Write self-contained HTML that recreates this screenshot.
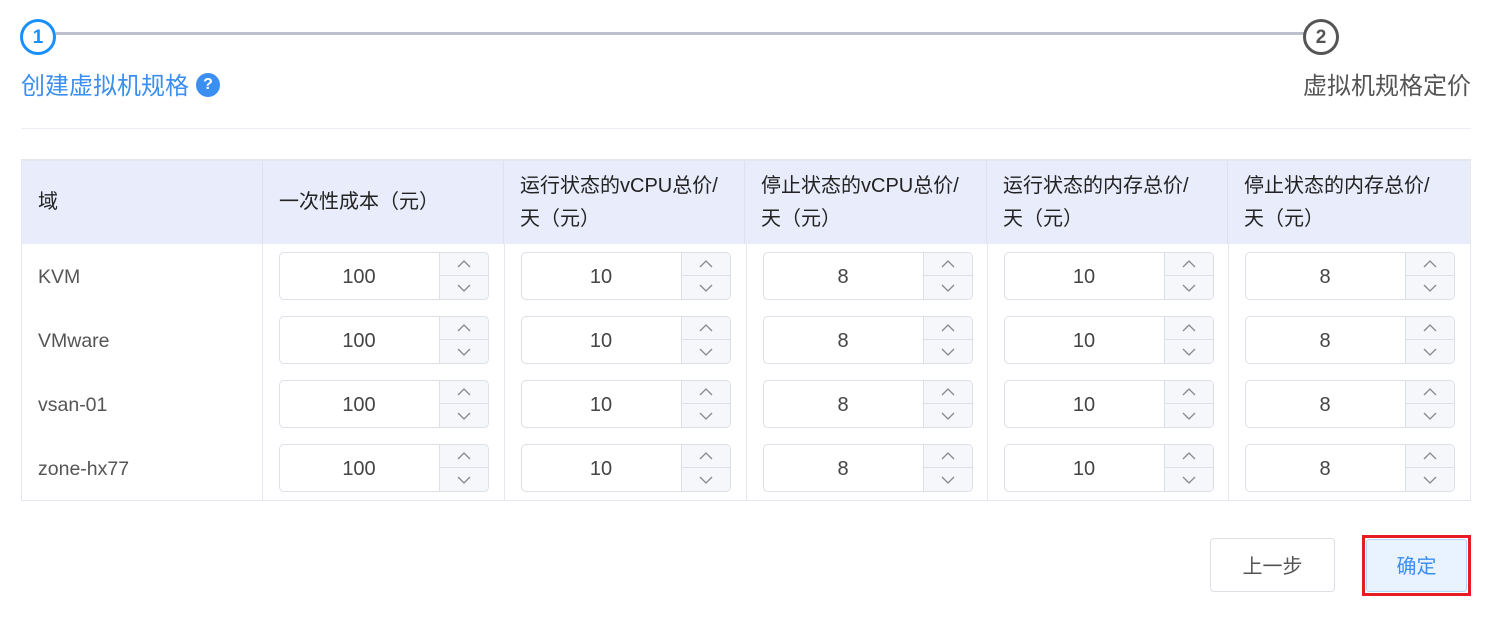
<!DOCTYPE html>
<html><head><meta charset="utf-8"><style>
*{box-sizing:border-box;margin:0;padding:0}
body{width:1501px;height:617px;background:#fff;font-family:"Liberation Sans","Noto Sans CJK SC",sans-serif;position:relative;overflow:hidden}
.abs{position:absolute}
.circ{position:absolute;width:36px;height:36px;border-radius:50%;border:3px solid;font-weight:bold;font-size:19px;text-align:center;line-height:31px;background:#fff}
.hcell{position:absolute;top:161px;height:83px;background:#e9ecfb;border-right:1px solid #dde2f0;font-size:20px;color:#222;padding-left:16px;display:flex;align-items:center;line-height:33px}
.cell{position:absolute;height:64px;border-right:1px solid #e4e7ed}
.lbl{font-size:19.5px;color:#555;padding-left:16px;line-height:66px}
.inp{position:absolute;left:16px;top:8px;width:210px;height:48px;border:1px solid #dcdfe6;border-radius:5px;background:#fff;overflow:hidden}
.inp .v{position:absolute;left:0;top:0;width:158px;height:46px;line-height:49px;text-align:center;font-size:20px;color:#444}
.sp{position:absolute;right:0;top:0;width:49px;height:46px;background:#f5f7fa;border-left:1px solid #dcdfe6}
.sp div{height:23px;display:flex;align-items:center;justify-content:center}
.sp div:first-child{border-bottom:1px solid #dcdfe6}
</style></head><body>
<div class="abs" style="left:56px;top:32px;width:1248px;height:3px;background:#bcc1cc"></div>
<div class="circ" style="left:20px;top:19px;border-color:#1890ff;color:#1890ff">1</div>
<div class="circ" style="left:1303px;top:19px;border-color:#555;color:#555">2</div>
<div class="abs" style="left:21px;top:72px;font-size:24px;color:#3a8ff0;line-height:30px">创建虚拟机规格</div>
<div class="abs" style="left:196px;top:73px;width:24px;height:24px;border-radius:50%;background:#3a8ff0;color:#fff;font-weight:bold;font-size:16px;text-align:center;line-height:24px">?</div>
<div class="abs" style="right:30px;top:72px;font-size:24px;color:#555;line-height:30px">虚拟机规格定价</div>
<div class="abs" style="left:21px;top:128px;width:1450px;height:1px;background:#ebeef5"></div>
<div class="abs" style="left:21px;top:159px;width:1450px;height:342px;border:1px solid #e4e7ed;border-top:2px solid #e4e7ed"></div>
<div class="hcell" style="left:22px;width:241px">域</div>
<div class="hcell" style="left:263px;width:241px">一次性成本（元）</div>
<div class="hcell" style="left:504px;width:241px">运行状态的vCPU总价/<br>天（元）</div>
<div class="hcell" style="left:745px;width:242px">停止状态的vCPU总价/<br>天（元）</div>
<div class="hcell" style="left:987px;width:241px">运行状态的内存总价/<br>天（元）</div>
<div class="hcell" style="left:1228px;width:242px;border-right:0">停止状态的内存总价/<br>天（元）</div>
<div id="rows"></div>
<div class="abs" style="left:1210px;top:538px;width:125px;height:54px;border:1px solid #dcdfe6;border-radius:4px;font-size:20px;color:#555;text-align:center;line-height:56px">上一步</div>
<div class="abs" style="left:1362px;top:535px;width:109px;height:61px;border:3px solid #e41c23"></div>
<div class="abs" style="left:1366px;top:539px;width:101px;height:53px;background:#e8f3ff;border:1px solid #b3d6fb;border-radius:3px;font-size:20px;color:#3a8ff0;text-align:center;line-height:54px">确定</div>
<script>
var names=["KVM","VMware","vsan-01","zone-hx77"],vals=["100","10","8","10","8"];
var xs=[22,263,505,747,988,1229,1470],h="";
var up='<svg width="14" height="8" viewBox="0 0 14 8"><path d="M1 7L7 1L13 7" fill="none" stroke="#888" stroke-width="1.3"/></svg>';
var dn='<svg width="14" height="8" viewBox="0 0 14 8"><path d="M1 1L7 7L13 1" fill="none" stroke="#888" stroke-width="1.3"/></svg>';
for(var r=0;r<4;r++){var y=244+r*64;
for(var c=0;c<6;c++){var w=xs[c+1]-xs[c];
h+='<div class="cell" style="left:'+xs[c]+'px;top:'+y+'px;width:'+w+'px;'+(c==5?'border-right:0':'')+'">';
if(c==0)h+='<div class="lbl">'+names[r]+'</div>';
else h+='<div class="inp"><div class="v">'+vals[c-1]+'</div><div class="sp"><div>'+up+'</div><div>'+dn+'</div></div></div>';
h+='</div>';}}
document.getElementById("rows").innerHTML=h;
</script>
</body></html>
